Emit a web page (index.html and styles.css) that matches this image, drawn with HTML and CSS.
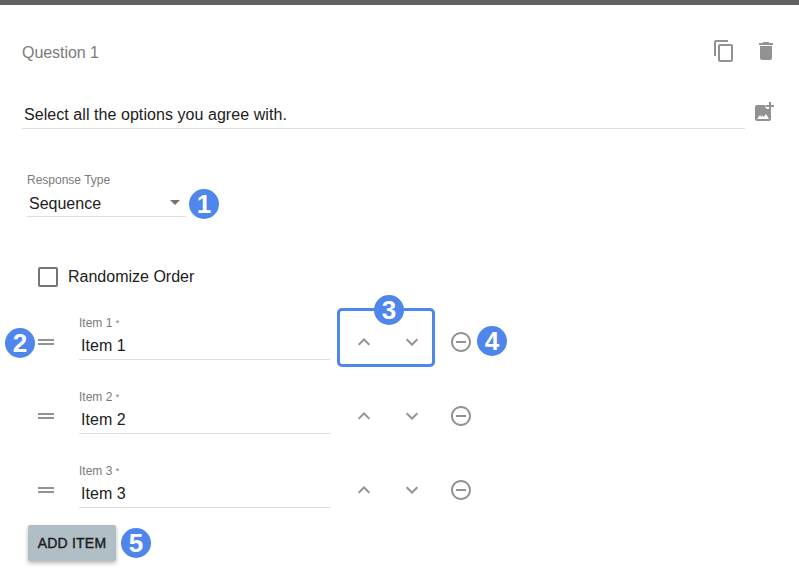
FILE: index.html
```
<!DOCTYPE html>
<html lang="en">
<head>
<meta charset="utf-8">
<title>Question editor</title>
<link rel="stylesheet" href="styles.css">
</head>
<body>
<main class="card">
  <header class="header">
    <h1 class="heading">Question 1</h1>
    <svg class="icon copy" viewBox="0 0 24 24"><path d="M16 1H4c-1.100 0-2 .9-2 2v14h2V3h12V1zm3 4H8c-1.100 0-2 .9-2 2v14c0 1.100.9 2 2 2h11c1.100 0 2-.9 2-2V7c0-1.100-.9-2-2-2zm0 16H8V7h11v14z"/></svg>
    <svg class="icon" viewBox="0 0 24 24"><path d="M6 19c0 1.100.9 2 2 2h8c1.100 0 2-.9 2-2V7H6v12zM19 4h-3.500l-1-1h-5l-1 1H5v2h14V4z"/></svg>
  </header>
  <section class="prompt">
    <div class="prompt-text">Select all the options you agree with.</div>
    <svg class="icon photo" viewBox="0 0 24 24"><path fill-rule="evenodd" d="M4 5h8.500v2c0 1.100.9 2 2 2H18v10c0 1.100-.9 2-2 2H4c-1.100 0-2-.9-2-2V7c0-1.100.9-2 2-2zM4 19h12l-3-5-2.500 3-1-1.500L8.500 17 7 15z"/><path d="M16 2h2v3h3v2h-3v3h-2V7h-3V5h3z"/></svg>
  </section>
  <section class="type">
    <div class="select">
      <div class="label">Response Type</div>
      <div class="select-value"><span>Sequence</span><i class="caret"></i></div>
    </div>
    <span class="badge b1">1</span>
  </section>
  <label class="random"><span class="box"></span><span>Randomize Order</span></label>
  <section class="items">
    <div class="item">
      <span class="badge b2">2</span>
      <svg class="icon drag" viewBox="0 0 24 24"><path d="M4 9h16v2H4zM4 13h16v2H4z"/></svg>
      <div class="field"><div class="label">Item 1 <sup>*</sup></div><div class="value">Item 1</div></div>
      <div class="arrows">
        <svg class="icon" viewBox="0 0 24 24"><path d="M12 8l-6 6 1.410 1.410L12 10.830l4.590 4.580L18 14z"/></svg>
        <svg class="icon" viewBox="0 0 24 24"><path d="M16.590 8.590L12 13.170 7.410 8.590 6 10l6 6 6-6z"/></svg>
        <span class="outline"></span>
        <span class="badge b3">3</span>
      </div>
      <svg class="icon remove" viewBox="0 0 24 24"><path d="M7 11v2h10v-2H7zm5-9C6.480 2 2 6.480 2 12s4.480 10 10 10 10-4.480 10-10S17.520 2 12 2zm0 18c-4.410 0-8-3.590-8-8s3.590-8 8-8 8 3.590 8 8-3.590 8-8 8z"/></svg>
      <span class="badge b4">4</span>
    </div>
    <div class="item">
      <svg class="icon drag" viewBox="0 0 24 24"><path d="M4 9h16v2H4zM4 13h16v2H4z"/></svg>
      <div class="field"><div class="label">Item 2 <sup>*</sup></div><div class="value">Item 2</div></div>
      <div class="arrows">
        <svg class="icon" viewBox="0 0 24 24"><path d="M12 8l-6 6 1.410 1.410L12 10.830l4.590 4.580L18 14z"/></svg>
        <svg class="icon" viewBox="0 0 24 24"><path d="M16.590 8.590L12 13.170 7.410 8.590 6 10l6 6 6-6z"/></svg>
      </div>
      <svg class="icon remove" viewBox="0 0 24 24"><path d="M7 11v2h10v-2H7zm5-9C6.480 2 2 6.480 2 12s4.480 10 10 10 10-4.480 10-10S17.520 2 12 2zm0 18c-4.410 0-8-3.590-8-8s3.590-8 8-8 8 3.590 8 8-3.590 8-8 8z"/></svg>
    </div>
    <div class="item">
      <svg class="icon drag" viewBox="0 0 24 24"><path d="M4 9h16v2H4zM4 13h16v2H4z"/></svg>
      <div class="field"><div class="label">Item 3 <sup>*</sup></div><div class="value">Item 3</div></div>
      <div class="arrows">
        <svg class="icon" viewBox="0 0 24 24"><path d="M12 8l-6 6 1.410 1.410L12 10.830l4.590 4.580L18 14z"/></svg>
        <svg class="icon" viewBox="0 0 24 24"><path d="M16.590 8.590L12 13.170 7.410 8.590 6 10l6 6 6-6z"/></svg>
      </div>
      <svg class="icon remove" viewBox="0 0 24 24"><path d="M7 11v2h10v-2H7zm5-9C6.480 2 2 6.480 2 12s4.480 10 10 10 10-4.480 10-10S17.520 2 12 2zm0 18c-4.410 0-8-3.590-8-8s3.590-8 8-8 8 3.590 8 8-3.590 8-8 8z"/></svg>
    </div>
  </section>
  <footer class="footer">
    <button class="add" type="button">ADD ITEM</button>
    <span class="badge">5</span>
  </footer>
</main>
</body>
</html>
```
FILE: styles.css
```
* { box-sizing: border-box; }
body {
  margin: 0;
  background: #fff;
  color: #212121;
  font: 16px/20px "Liberation Sans", Arial, sans-serif;
}
.card {
  height: 572px;
  overflow: hidden;
  border-top: 5px solid #616161;
}
.icon { width: 24px; height: 24px; flex: none; fill: #929292; }
.header {
  display: flex;
  align-items: center;
  height: 48px;
  margin-top: 22px;
  padding: 0 21px 0 22px;
}
.heading { margin: 3px auto 0 0; font-size: 16px; font-weight: 400; letter-spacing: -.05px; color: #7b7b7b; }
.copy { margin-right: 18.500px; }
.prompt { display: flex; height: 54px; padding-left: 22px; }
.prompt-text {
  width: 723px;
  padding: 30px 2px 0;
  border-bottom: 1px solid #dedede;
  letter-spacing: .06px;
}
.photo { margin: 25px 0 0 8px; }
.type { display: flex; align-items: center; margin: 43px 0 0 27px; height: 45px; }
.select { width: 159px; height: 45px; border-bottom: 1px solid #dedede; }
.label { font-size: 12px; line-height: 16px; color: #7b7b7b; }
.select-value {
  display: flex;
  align-items: center;
  justify-content: space-between;
  padding: 6px 6px 0 2px;
}
.caret {
  border: 5.500px solid transparent;
  border-top-color: #757575;
  border-bottom: 0;
  margin-top: -3px;
}
.badge {
  width: 30px;
  height: 30px;
  border-radius: 50%;
  background: #4e86ec;
  color: #fff;
  font-size: 26px;
  font-weight: 700;
  line-height: 31px;
  text-align: center;
}
.b1 { margin: 18px 0 0 3px; }
.random { display: flex; align-items: center; gap: 10px; height: 20px; margin: 50px 0 0 38px; }
.box { width: 20px; height: 20px; border: 2px solid #757575; border-radius: 2px; }
.items { margin-top: 18px; }
.item { position: relative; display: flex; align-items: center; height: 74px; padding-left: 34px; }
.field {
  width: 251px;
  height: 45px;
  margin: 0 0 10px 21px;
  border-bottom: 1px solid #dedede;
}
.value { padding: 5px 2px 0; letter-spacing: .06px; }
.label sup { font-size: 9px; line-height: 0; vertical-align: 1px; }
.arrows { position: relative; display: flex; gap: 24px; margin-left: 22px; }
.remove { margin-left: 24.500px; }
.outline {
  position: absolute;
  left: -15px;
  top: -22px;
  width: 98px;
  height: 59px;
  border: 3px solid #4e86ec;
  border-radius: 5px;
}
.b2 { position: absolute; left: 5px; top: 23px; }
.b3 { position: absolute; left: 22px; top: -35px; }
.b4 { position: absolute; left: 477px; top: 21px; }
.footer { display: flex; align-items: center; gap: 5px; margin: -2px 0 0 28px; }
.add {
  width: 88px;
  height: 36px;
  padding: 0;
  border: 0;
  border-radius: 2px;
  background: #b0bec5;
  box-shadow: 0 2px 4px rgba(0, 0, 0, .3);
  color: #1c1c1c;
  font: 14px/36px "Liberation Sans", Arial, sans-serif;
  letter-spacing: .2px;
  -webkit-text-stroke: .4px #1c1c1c;
}
```
